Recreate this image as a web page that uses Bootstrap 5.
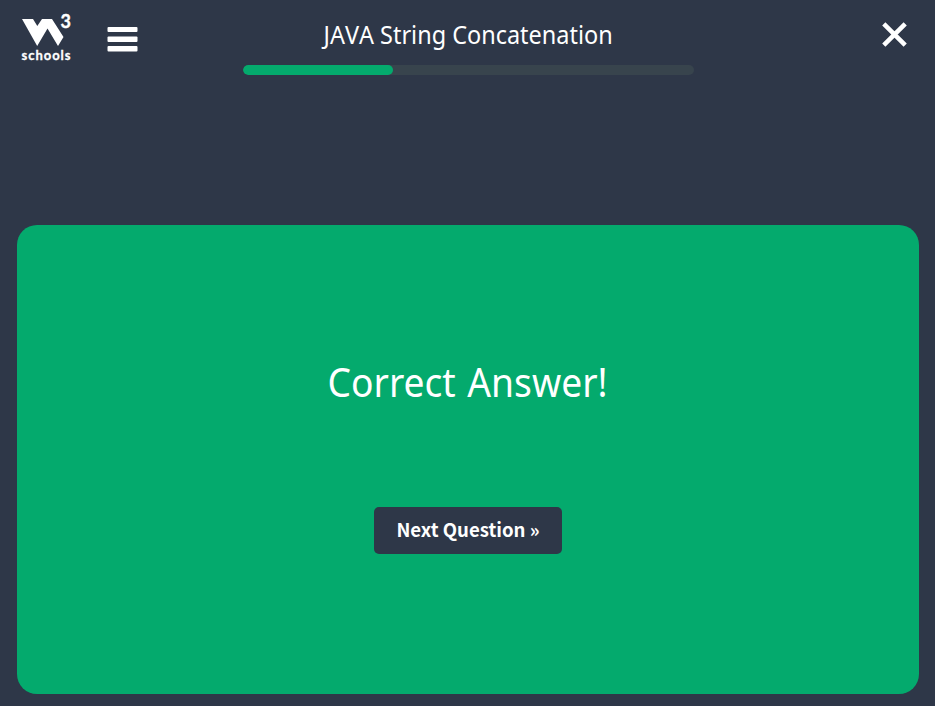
<!DOCTYPE html>
<html lang="en">
<head>
<meta charset="utf-8">
<meta name="viewport" content="width=device-width, initial-scale=1">
<title>JAVA String Concatenation</title>
<link href="https://cdn.jsdelivr.net/npm/bootstrap@5.3.0/dist/css/bootstrap.min.css" rel="stylesheet">
<style>
  body { background: #2e3748; color: #fff; font-family: "Noto Sans", "Open Sans", sans-serif; }
  .topbar { height: 225px; padding: 14px 28px 0 22px; }
  .side { width: 221px; }
  .brand-logo { width: 50px; height: 48px; overflow: visible; }
  .menu-btn { margin: 13px 0 0 35px; line-height: 0; }
  .close-btn { margin-top: 8px; line-height: 0; }
  .quiz-head { width: 451px; flex: none; }
  .quiz-title { font-size: 25px; line-height: 34px; margin: 3px 0 14px; font-weight: 400; white-space: nowrap; font-kerning: none; }
  .quiz-title span, .result-text span { display: inline-block; }
  .quiz-title span { transform: scaleX(.938); }
  .result-text span { transform: scaleX(.93); word-spacing: 2px; }
  .quiz-progress { height: 10px; border-radius: 5px; background: #38444d; }
  .quiz-progress .progress-bar { background: #04aa6d; border-radius: 5px; }
  .result { margin: 0 16px 12px 17px; height: 469px; background: #04aa6d; border-radius: 20px; padding-top: 127px; }
  .result-text { font-size: 40px; line-height: 60px; font-weight: 400; margin: 0 0 95px; white-space: nowrap; }
  .next-btn { width: 188px; height: 47px; padding: 0 0 3px; border: 0; border-radius: 5px; background: #2e3748; color: #fff; font: 700 18.600px/44px "Noto Sans CJK SC", sans-serif; }
  .next-btn:hover { background: #242c3a; color: #fff; }
</style>
</head>
<body>
<header class="topbar d-flex align-items-start">
  <div class="side flex-shrink-0 d-flex align-items-start">
    <a href="#" aria-label="W3Schools" class="d-block lh-1">
      <svg class="brand-logo d-block" viewBox="22 14 50 48" fill="#fff">
        <path d="M22 19H33L37.300 26L42 19H52L63.500 37L58 46L47.500 28.500L37.200 46Z"/>
        <text x="60.500" y="28" font-family="Lato, sans-serif" font-weight="700" font-size="18" stroke="#fff" stroke-width=".4">3</text>
        <text x="21.500" y="60" font-family="Lato, sans-serif" font-weight="700" font-size="13" textLength="49" stroke="#fff" stroke-width=".3">schools</text>
      </svg>
    </a>
    <button class="menu-btn btn p-0 border-0" aria-label="Menu">
      <svg width="31" height="25" fill="#fff"><rect x=".5" width="30" height="5" rx="1"/><rect x=".5" y="9.500" width="30" height="5.500" rx="1"/><rect x=".5" y="19" width="30" height="5.500" rx="1"/></svg>
    </button>
  </div>
  <div class="quiz-head text-center">
    <h1 class="quiz-title"><span>JAVA String Concatenation</span></h1>
    <div class="quiz-progress progress" role="progressbar" aria-valuenow="33" aria-valuemin="0" aria-valuemax="100">
      <div class="progress-bar" style="width:33.300%"></div>
    </div>
  </div>
  <div class="flex-grow-1 d-flex justify-content-end">
    <button class="close-btn btn p-0 border-0" aria-label="Close">
      <svg width="25" height="25" stroke="#fff" stroke-width="4.500"><path d="M1.800 1.800L23.200 23.200M23.200 1.800L1.800 23.200"/></svg>
    </button>
  </div>
</header>
<main class="result d-flex flex-column align-items-center">
  <h2 class="result-text"><span>Correct Answer!</span></h2>
  <button class="next-btn btn">Next Question »</button>
</main>
<script src="https://cdn.jsdelivr.net/npm/bootstrap@5.3.0/dist/js/bootstrap.bundle.min.js"></script>
</body>
</html>
